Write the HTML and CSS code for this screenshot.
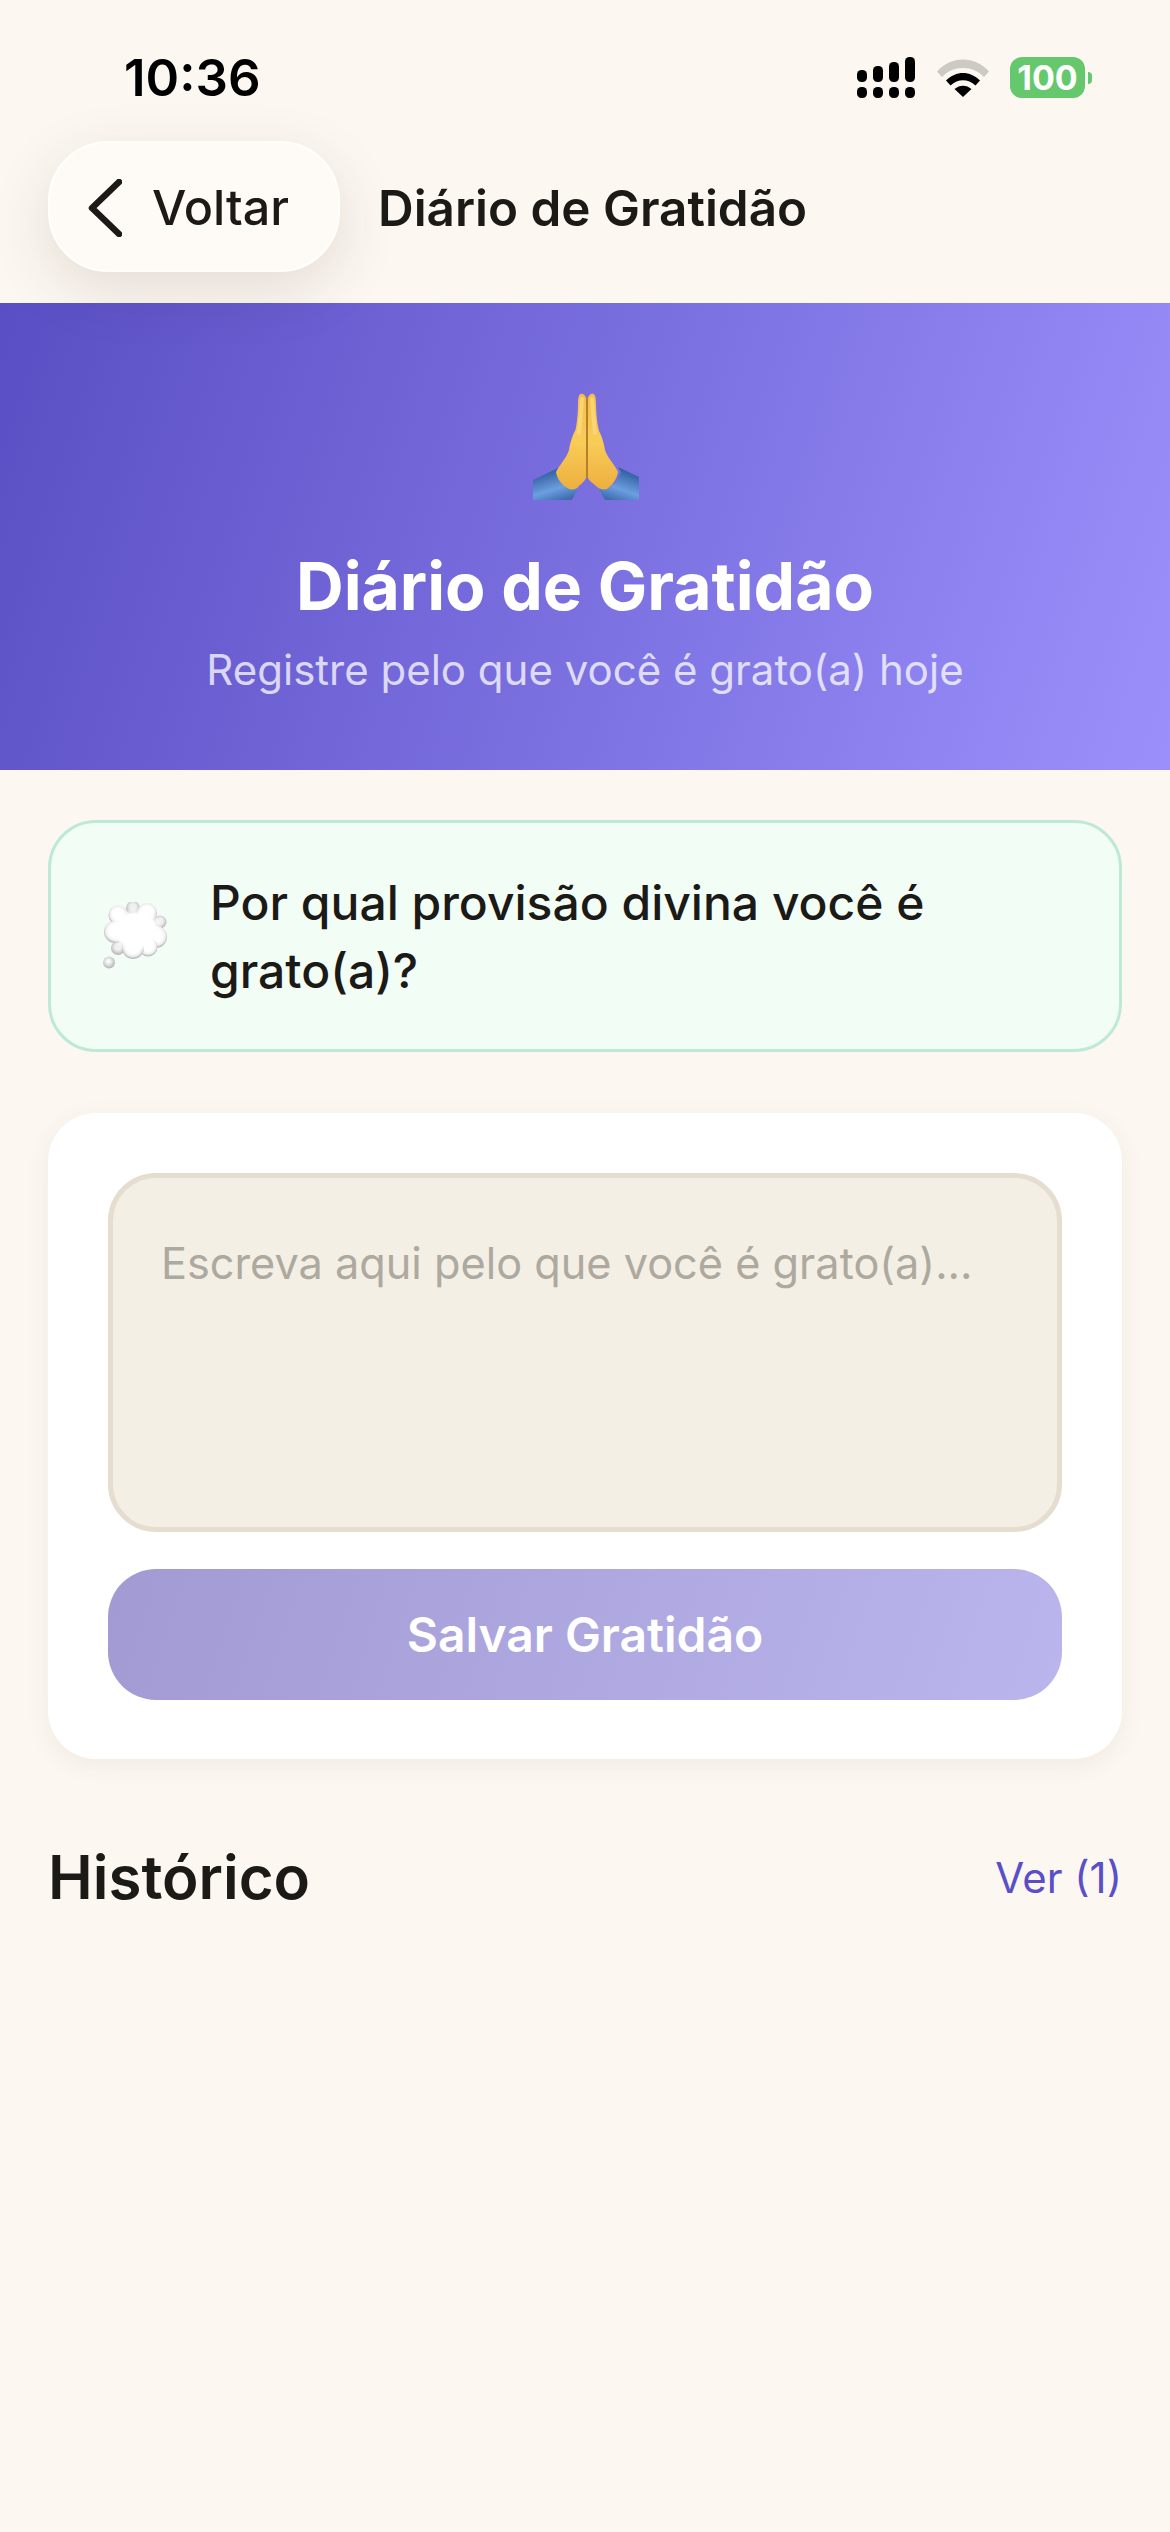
FILE: index.html
```html
<!DOCTYPE html>
<html lang="pt">
<head>
<meta charset="utf-8">
<title>Diário de Gratidão</title>
<link rel="stylesheet" href="styles.css">
</head>
<body>
<header class="top">
  <div class="status">
    <span class="time">10:36</span>
    <div class="status-icons">
      <svg class="signal" width="59" height="41" viewBox="0 0 59 41" fill="#000">
        <rect x="0" y="13" width="10" height="12" rx="4.5"/><rect x="16" y="9" width="10" height="16" rx="4.5"/><rect x="32" y="5" width="10" height="20" rx="4.5"/><rect x="48" y="0" width="10" height="25" rx="4.5"/>
        <rect x="0" y="30" width="10" height="11" rx="4.5"/><rect x="16" y="30" width="10" height="11" rx="4.5"/><rect x="32" y="30" width="10" height="11" rx="4.5"/><rect x="48" y="30" width="10" height="11" rx="4.5"/>
      </svg>
      <svg class="wifi" width="52" height="38" viewBox="0 0 52 38">
        <path d="M0 12.500C14 -3.500 38 -3.500 52 12.500L47 18C36 6 16 6 5 18Z" fill="#cdcac3"/>
        <path d="M9 21.500C19 11.500 33 11.500 43 21.500L38.500 26.500C31 19.500 21 19.500 13.500 26.500Z" fill="#000"/>
        <path d="M17.500 30C22.500 25.500 29.500 25.500 34.500 30L26 38Z" fill="#000"/>
      </svg>
      <div class="battery"><span class="battery-level">100</span><span class="battery-cap"></span></div>
    </div>
  </div>
  <nav class="nav">
    <button class="back">
      <svg width="34" height="58" viewBox="0 0 34 58" fill="none"><path d="M31 3L4 29L31 55" stroke="#1c1a17" stroke-width="6.500" stroke-linecap="round" stroke-linejoin="round"/></svg>
      <span>Voltar</span>
    </button>
    <h1 class="nav-title">Diário de Gratidão</h1>
  </nav>
</header>

<section class="hero">
  <svg class="hands" width="107" height="108" viewBox="0 0 107 108">
    <defs>
      <linearGradient id="skin" x1="0" y1="0" x2="0" y2="1"><stop offset="0" stop-color="#f3bf4c"/><stop offset=".5" stop-color="#f9cc58"/><stop offset="1" stop-color="#edaf3f"/></linearGradient>
      <linearGradient id="sleeveL" x1=".2" y1="0" x2=".65" y2="1"><stop offset="0" stop-color="#234f8f"/><stop offset=".65" stop-color="#6b9fe0"/><stop offset="1" stop-color="#3f6db0"/></linearGradient>
      <linearGradient id="sleeveR" x1=".8" y1="0" x2=".35" y2="1"><stop offset="0" stop-color="#234f8f"/><stop offset=".65" stop-color="#6b9fe0"/><stop offset="1" stop-color="#3f6db0"/></linearGradient>
    </defs>
    <path d="M0 87L25 75L23 79L27 89L36 96L46 93L39 107H0Z" fill="url(#sleeveL)"/>
    <path d="M106 84L85 74L88 79L82 90L74 96L64 93L72 107H106Z" fill="url(#sleeveR)"/>
    <path d="M53 85C53.500 60 53.500 30 53 5C52 1 49 0 47.500 1C45.500 2 45 6 45 10C45 20 44 30 42.500 37C40 41 37 50 36 57C34 64 28 70 23 79C24 85 28 92 36 96C40 97 44 96 46 93C49 90 52 88 53 85Z" fill="url(#skin)"/>
    <path d="M55 85C54.500 60 54.500 30 55 5C56 1 59 0 60.500 1C62.500 2 63 6 63 10C63 20 64 30 66 38C68 41 71 50 72 57C74 64 82 72 85 79C84 85 80 92 74 96C70 97 66 96 63 93C60 90 56 88 55 85Z" fill="url(#skin)"/>
    <path d="M54 4V85" stroke="#b57f2b" stroke-width="2"/>
    <path d="M49 6C48 18 47.500 28 46 40" stroke="#fde08a" stroke-width="4" fill="none" stroke-linecap="round" opacity=".6"/>
    <path d="M59 6C60 18 60.500 28 62 40" stroke="#fde08a" stroke-width="4" fill="none" stroke-linecap="round" opacity=".6"/>
  </svg>
  <h2 class="hero-title">Diário de Gratidão</h2>
  <p class="hero-sub">Registre pelo que você é grato(a) hoje</p>
</section>

<main class="content">
  <section class="prompt">
    <svg class="cloud" width="66" height="68" viewBox="0 0 66 68">
      <defs>
        <radialGradient id="puff" cx=".5" cy=".45" r=".52"><stop offset=".55" stop-color="#fff"/><stop offset=".82" stop-color="#eeeeee"/><stop offset="1" stop-color="#bcbcbc"/></radialGradient>
        <radialGradient id="puffBack" cx=".5" cy=".42" r=".55"><stop offset=".4" stop-color="#f0f0f0"/><stop offset="1" stop-color="#b8b8b8"/></radialGradient>
        <radialGradient id="puffDot" cx=".45" cy=".4" r=".6"><stop offset=".2" stop-color="#f8f8f8"/><stop offset="1" stop-color="#b4b4b4"/></radialGradient>
        <radialGradient id="puffCore"><stop offset=".72" stop-color="#fff"/><stop offset="1" stop-color="#fff" stop-opacity="0"/></radialGradient>
      </defs>
      <circle cx="15" cy="46" r="7" fill="url(#puffBack)"/>
      <circle cx="57" cy="20" r="6.500" fill="url(#puffBack)"/>
      <circle cx="30" cy="6" r="7" fill="url(#puffBack)"/>
      <circle cx="15" cy="13" r="9.500" fill="url(#puff)"/>
      <circle cx="44" cy="11" r="10" fill="url(#puff)"/>
      <circle cx="12" cy="30" r="11" fill="url(#puff)"/>
      <circle cx="53" cy="35" r="11" fill="url(#puff)"/>
      <circle cx="45" cy="45" r="9.500" fill="url(#puff)"/>
      <circle cx="30" cy="46" r="11" fill="url(#puff)"/>
      <ellipse cx="33" cy="28" rx="27" ry="22" fill="url(#puffCore)"/>
      <circle cx="6" cy="60.500" r="6" fill="url(#puffDot)"/>
    </svg>
    <p class="prompt-text">Por qual provisão divina você é grato(a)?</p>
  </section>

  <section class="card">
    <div class="field">Escreva aqui pelo que você é grato(a)...</div>
    <button class="save">Salvar Gratidão</button>
  </section>

  <section class="history">
    <h3 class="history-title">Histórico</h3>
    <span class="history-link">Ver (1)</span>
  </section>
</main>
</body>
</html>
```
FILE: styles.css
```css
* { box-sizing: border-box; }
html, body { margin: 0; padding: 0; }
body {
  width: 1170px;
  min-height: 2532px;
  background: #fcf7f1;
  font-family: Inter, "Noto Sans", sans-serif;
  color: #1c1a17;
}
h1, h2, h3, p { margin: 0; }
button { font-family: inherit; border: none; }

.top { height: 303px; }
.status {
  height: 141px;
  padding: 49px 0 0 124px;
  display: flex;
  justify-content: space-between;
}
.time {
  font-size: 51px;
  font-weight: 600;
  line-height: 58px;
  color: #000;
}
.status-icons {
  display: flex;
  align-items: flex-start;
  gap: 21px;
  padding: 8px 0 0;
  margin-right: 78px;
}
.wifi { margin-top: 2px; }
.battery { display: flex; align-items: center; height: 41px; gap: 3px; }
.battery-level {
  width: 75px;
  height: 41px;
  border-radius: 12px;
  background: #65c86c;
  color: #fff;
  font-size: 34px;
  font-weight: 700;
  line-height: 41px;
  text-align: center;
}
.battery-cap {
  width: 4px;
  height: 12px;
  border-radius: 0 6px 6px 0;
  background: #65c86c;
}

.nav {
  display: flex;
  align-items: center;
  gap: 38px;
  padding: 0 48px;
}
.back {
  width: 292px;
  height: 131px;
  border-radius: 60px;
  background: #fefbf6;
  border: 2px solid #fffefb;
  box-shadow: 0 18px 60px rgba(60, 50, 30, .13);
  display: flex;
  align-items: center;
  gap: 30px;
  padding: 2px 0 0 38px;
  font-size: 48.500px;
  font-weight: 500;
  color: #1c1a17;
}
.nav-title { font-size: 49.400px; font-weight: 600; line-height: 60px; padding-top: 2px; }

.hero {
  height: 467px;
  background: linear-gradient(108deg, #5a4ec4 0%, #9b90fb 100%);
  color: #fff;
  display: flex;
  flex-direction: column;
  align-items: center;
  padding-top: 90px;
}
.hands { display: block; margin-left: 3px; }
.hero-title {
  margin-top: 45px;
  font-size: 66px;
  line-height: 80px;
  font-weight: 700;
}
.hero-sub {
  margin-top: 18px;
  font-size: 42px;
  line-height: 52px;
  color: rgba(255, 255, 255, .75);
}

.content { padding: 50px 48px 0; }
.prompt {
  height: 232px;
  border: 3px solid #bde9d6;
  border-radius: 48px;
  background: #f2fdf6;
  display: flex;
  align-items: center;
  gap: 41px;
  padding: 0 48px 0 52px;
}
.cloud { flex: none; }
.prompt-text { font-size: 48px; line-height: 68px; font-weight: 500; padding-top: 1px; }

.card {
  margin-top: 61px;
  height: 646px;
  background: #fff;
  border-radius: 48px;
  box-shadow: 0 6px 24px rgba(90, 70, 40, .07);
  padding: 60px;
}
.field {
  height: 359px;
  border: 5px solid #e5ddd0;
  border-radius: 48px;
  background: #f4efe5;
  padding: 55px 48px;
  font-size: 43.250px;
  line-height: 60px;
  color: #ada99f;
}
.save {
  display: block;
  width: 100%;
  height: 131px;
  margin-top: 37px;
  border-radius: 48px;
  background: linear-gradient(108deg, #a29bd3 0%, #bbb5ed 100%);
  color: #fff;
  font-size: 48px;
  font-weight: 600;
}

.history {
  margin-top: 80px;
  display: flex;
  justify-content: space-between;
  align-items: center;
}
.history-title { font-size: 60px; font-weight: 600; line-height: 76px; }
.history-link { font-size: 42px; color: #5a4fc7; }
```
